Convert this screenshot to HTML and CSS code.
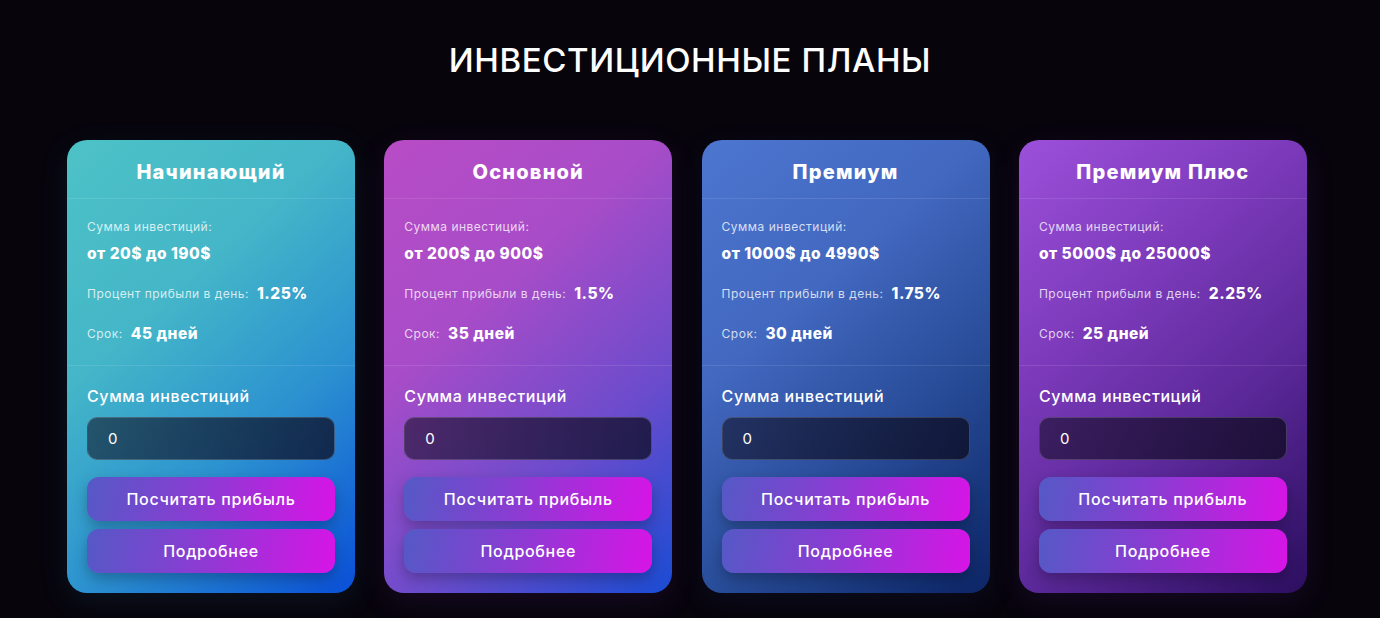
FILE: index.html
```html
<!DOCTYPE html>
<html lang="ru">
<head>
<meta charset="utf-8">
<title>Инвестиционные планы</title>
<link rel="stylesheet" href="styles.css">
</head>
<body>
<section class="plans">
  <h1 class="plans-title">ИНВЕСТИЦИОННЫЕ ПЛАНЫ</h1>
  <div class="plans-grid">
    <div class="card card-1">
      <div class="card-head">Начинающий</div>
      <div class="card-info">
        <div class="info-label">Сумма инвестиций:</div>
        <div class="info-range">от 20$ до 190$</div>
        <div class="info-row"><span class="info-label">Процент прибыли в день:</span><span class="info-value">1.25%</span></div>
        <div class="info-row"><span class="info-label">Срок:</span><span class="info-value">45 дней</span></div>
      </div>
      <div class="card-calc">
        <div class="calc-label">Сумма инвестиций</div>
        <div class="calc-input">0</div>
        <div class="btn">Посчитать прибыль</div>
        <div class="btn">Подробнее</div>
      </div>
    </div>
    <div class="card card-2">
      <div class="card-head">Основной</div>
      <div class="card-info">
        <div class="info-label">Сумма инвестиций:</div>
        <div class="info-range">от 200$ до 900$</div>
        <div class="info-row"><span class="info-label">Процент прибыли в день:</span><span class="info-value">1.5%</span></div>
        <div class="info-row"><span class="info-label">Срок:</span><span class="info-value">35 дней</span></div>
      </div>
      <div class="card-calc">
        <div class="calc-label">Сумма инвестиций</div>
        <div class="calc-input">0</div>
        <div class="btn">Посчитать прибыль</div>
        <div class="btn">Подробнее</div>
      </div>
    </div>
    <div class="card card-3">
      <div class="card-head">Премиум</div>
      <div class="card-info">
        <div class="info-label">Сумма инвестиций:</div>
        <div class="info-range">от 1000$ до 4990$</div>
        <div class="info-row"><span class="info-label">Процент прибыли в день:</span><span class="info-value">1.75%</span></div>
        <div class="info-row"><span class="info-label">Срок:</span><span class="info-value">30 дней</span></div>
      </div>
      <div class="card-calc">
        <div class="calc-label">Сумма инвестиций</div>
        <div class="calc-input">0</div>
        <div class="btn">Посчитать прибыль</div>
        <div class="btn">Подробнее</div>
      </div>
    </div>
    <div class="card card-4">
      <div class="card-head">Премиум Плюс</div>
      <div class="card-info">
        <div class="info-label">Сумма инвестиций:</div>
        <div class="info-range">от 5000$ до 25000$</div>
        <div class="info-row"><span class="info-label">Процент прибыли в день:</span><span class="info-value">2.25%</span></div>
        <div class="info-row"><span class="info-label">Срок:</span><span class="info-value">25 дней</span></div>
      </div>
      <div class="card-calc">
        <div class="calc-label">Сумма инвестиций</div>
        <div class="calc-input">0</div>
        <div class="btn">Посчитать прибыль</div>
        <div class="btn">Подробнее</div>
      </div>
    </div>
  </div>
</section>
</body>
</html>
```

FILE: styles.css
```css
* { box-sizing: border-box; }
html, body {
  margin: 0;
  padding: 0;
  background: #07040c;
  color: #fff;
  font-family: "Inter", "Open Sans", "Liberation Sans", sans-serif;
}
.plans {
  width: 1380px;
  height: 618px;
  overflow: hidden;
  padding-top: 40px;
}
.plans-title {
  margin: 0 0 60px;
  text-align: center;
  font-size: 33px;
  line-height: 40px;
  font-weight: 500;
  letter-spacing: 0.6px;
}
.plans-grid {
  display: grid;
  grid-template-columns: repeat(4, 288px);
  column-gap: 29.3px;
  margin-left: 67px;
}
.card {
  height: 453px;
  border-radius: 20px;
  overflow: hidden;
  display: flex;
  flex-direction: column;
}
.card-1 { background: linear-gradient(138deg, #4dc2c6 0%, #44b6c8 35%, #2c92d0 65%, #0a4fd8 100%); box-shadow: 0 8px 30px rgba(40, 140, 180, 0.12); }
.card-2 { background: linear-gradient(138deg, #b84cc6 0%, #a84cc8 35%, #6c4ccc 68%, #1a4cd4 100%); box-shadow: 0 8px 30px rgba(150, 60, 200, 0.12); }
.card-3 { background: linear-gradient(138deg, #4d76d0 0%, #4268c0 35%, #284c98 65%, #0c2566 100%); box-shadow: 0 8px 30px rgba(60, 90, 180, 0.10); }
.card-4 { background: linear-gradient(138deg, #9c50da 0%, #7c3aba 35%, #5a2898 65%, #2c0f60 100%); box-shadow: 0 8px 30px rgba(130, 60, 200, 0.12); }

.card-head {
  height: 60px;
  display: flex;
  align-items: center;
  justify-content: center;
  font-size: 20px;
  font-weight: 800;
  letter-spacing: 1.2px;
  border-bottom: 1px solid rgba(255, 255, 255, 0.1);
  padding-top: 5px;
}
.card-info {
  padding: 20px 20px 21px;
  border-bottom: 1px solid rgba(255, 255, 255, 0.1);
}
.info-label {
  font-size: 12px;
  line-height: 16px;
  font-weight: 400;
  letter-spacing: 0.5px;
  color: rgba(255, 255, 255, 0.78);
}
.info-range {
  margin-top: 9px;
  font-size: 15.5px;
  line-height: 20px;
  font-weight: 800;
  letter-spacing: 0.5px;
}
.info-row {
  display: flex;
  align-items: center;
  gap: 8px;
  height: 20px;
  margin-top: 20px;
}
.info-value {
  font-size: 15.5px;
  line-height: 20px;
  font-weight: 800;
  letter-spacing: 0.5px;
}
.card-calc {
  flex: 1;
  padding: 20px 20px 20px;
  display: flex;
  flex-direction: column;
}
.calc-label {
  font-size: 16px;
  line-height: 20px;
  font-weight: 500;
  letter-spacing: 0.6px;
}
.calc-input {
  margin-top: 11px;
  height: 43px;
  border-radius: 10px;
  border: 1px solid rgba(255, 255, 255, 0.16);
  background: linear-gradient(90deg, rgba(15, 12, 30, 0.55), rgba(12, 10, 28, 0.72));
  display: flex;
  align-items: center;
  padding-left: 20px;
  font-size: 15px;
}
.btn {
  margin-top: 8px;
  height: 44px;
  border-radius: 12px;
  background: linear-gradient(100deg, #5559c6 0%, #8a3cd2 45%, #d814e6 100%);
  display: flex;
  align-items: center;
  justify-content: center;
  font-size: 16px;
  font-weight: 500;
  letter-spacing: 0.7px;
  box-shadow: 0 6px 14px rgba(0, 0, 0, 0.25);
}
.calc-input + .btn { margin-top: 17px; }
```
